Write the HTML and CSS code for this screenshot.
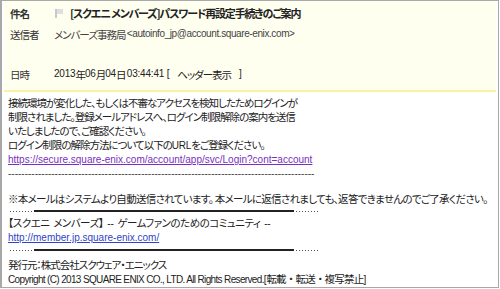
FILE: index.html
```html
<!DOCTYPE html>
<html lang="ja">
<head>
  <meta charset="UTF-8" />
  <title>パスワード再設定手続きのご案内</title>
  <link rel="stylesheet" href="styles.css">
</head>
<body>
  <div class="mail">
    <div class="head">
      <div class="row subject">
        <span class="label">件名</span>
        <span class="value">
          <svg class="flag" width="8" height="9" viewBox="0 0 8 9"><rect x="0" y="0" width="2" height="9" fill="#c8c8c8"/><rect x="2" y="0" width="6" height="5" fill="#dedede"/></svg>
          <b>[スクエニ メンバーズ]パスワード再設定手続きのご案内</b>
        </span>
      </div>
      <div class="row from">
        <span class="label">送信者</span>
        <span class="value">メンバーズ事務局&nbsp;<span class="en mail-addr">&lt;autoinfo_jp@account.square-enix.com&gt;</span></span>
      </div>
      <div class="row date">
        <span class="label">日時</span>
        <span class="value"><span class="en">2013</span>年<span class="en">06</span>月<span class="en">04</span>日&nbsp;<span class="en">03:44:41 [</span><span class="hdr">ヘッダー表示</span><span class="en">]</span></span>
      </div>
    </div>

    <div class="body">
      <p>接続環境が変化した、もしくは不審なアクセスを検知したためログインが<br>
      制限されました。登録メールアドレスへ、ログイン制限解除の案内を送信<br>
      いたしましたので、ご確認ください。<br>
      ログイン制限の解除方法について以下の<span class="en">URL</span>をご登録ください。<br>
      <a class="en link purple" href="#">https://secure.square-enix.com/account/app/svc/Login?cont=account</a><br>
      <span class="en dash">--------------------------------------------------------------------------------------------</span></p>

      <p class="note">※本メールはシステムより自動送信されています。 本メールに返信されましても、返答できませんのでご了承ください。</p>

      <div class="sep"><span class="dots"></span><span class="bar"></span><span class="dots"></span></div>
      <p><span class="community">【スクエニ メンバーズ】 <span class="en">--</span> ゲームファンのためのコミュニティ <span class="en">--</span></span><br>
      <a class="en link blue" href="#">http://member.jp.square-enix.com/</a></p>
      <div class="sep second"><span class="dots"></span><span class="bar"></span><span class="dots"></span></div>

      <p class="issuer">発行元：株式会社スクウェア・エニックス<br>
      <span class="en copy">Copyright (C) 2013 SQUARE ENIX CO., LTD. All Rights Reserved.</span><span class="en">[</span><span class="fixed">転載・転送・複写禁止</span><span class="en">]</span></p>
    </div>
  </div>
</body>
</html>
```

FILE: styles.css
```css
html, body {
  margin: 0;
  padding: 0;
  background-color: #fff;
}
body {
  font-family: "Noto Sans CJK JP", sans-serif;
  font-size: 10.5px;
  letter-spacing: -1px;
  color: #222;
  font-feature-settings: "palt";
}
.en {
  font-family: "Liberation Sans", sans-serif;
  font-size: 10px;
  line-height: 10px;
  letter-spacing: -0.2px;
}
.mail {
  width: 496px;
  height: 286px;
  border: 1px solid #a8a8a8;
  border-left-width: 2px;
  overflow: hidden;
}
.head {
  background-color: #fffff0;
  margin: 0 2px;
  padding: 4px 0 8px 6px;
  border-bottom: 2px solid #fff0a0;
}
.row {
  display: flex;
  align-items: center;
  height: 16px;
}
.row.from {
  margin-top: 5px;
  margin-bottom: 24px;
}
.label {
  width: 44px;
  color: #333;
}
.subject .label {
  font-weight: bold;
}
.from .value {
  color: #444;
}
.mail-addr {
  letter-spacing: -0.4px;
}
.value {
  display: flex;
  align-items: center;
  white-space: pre;
}
.flag {
  margin: 0 7px 0 1px;
}
.subject b {
  font-size: 11px;
  letter-spacing: -1.2px;
}
.hdr {
  margin: 0 8px;
}
.body {
  padding: 4px 6px 0 6px;
}
.body p {
  margin: 0;
  line-height: 14px;
}
.link {
  letter-spacing: 0;
}
.purple {
  color: #7a2fc0;
}
.blue {
  color: #2f45c8;
}
.dash {
  color: #444;
  letter-spacing: 0;
}
.community {
  letter-spacing: -0.5px;
  word-spacing: 2px;
}
.copy {
  letter-spacing: -0.65px;
}
.fixed {
  font-feature-settings: normal;
  letter-spacing: -0.8px;
}
.note {
  margin-top: 12px !important;
  white-space: nowrap;
  letter-spacing: -0.7px;
}
.sep {
  display: flex;
  align-items: center;
  width: 308px;
  height: 10px;
  margin-left: 2px;
}
.sep.second {
  height: 12px;
}
.sep .dots {
  width: 22px;
  height: 1px;
  background-image: repeating-linear-gradient(to right, #555 0 1px, transparent 1px 3px);
}
.sep .bar {
  flex: 1;
  height: 2px;
  margin: 0 2px;
  background-color: #222;
}
.issuer {
  margin-top: 2px !important;
}
```
